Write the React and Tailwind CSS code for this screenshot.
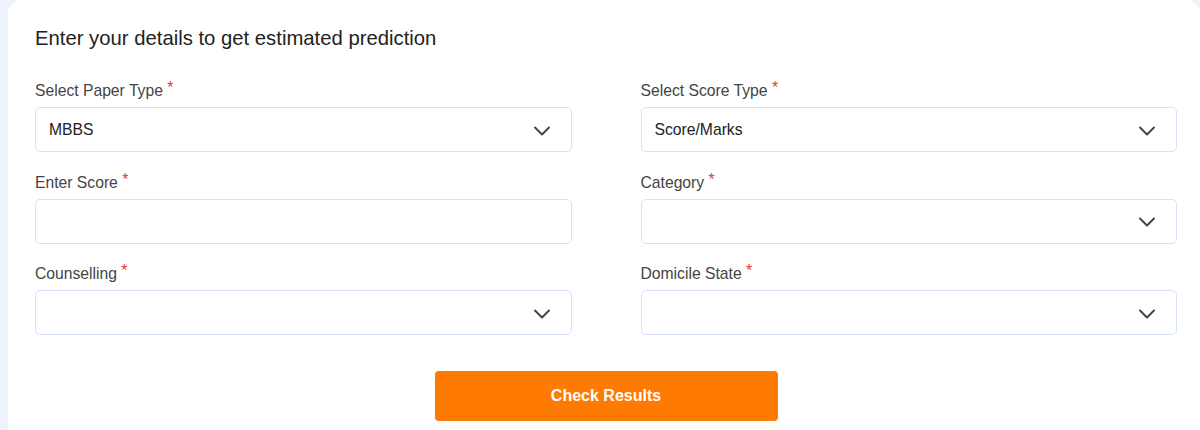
import { ChevronDown } from "lucide-react";

const fields = [
  { label: "Select Paper Type", value: "MBBS", select: true },
  { label: "Select Score Type", value: "Score/Marks", select: true },
  { label: "Enter Score", value: "", select: false },
  { label: "Category", value: "", select: true },
  { label: "Counselling", value: "", select: true },
  { label: "Domicile State", value: "", select: true },
];

function Field({ label, value, select }) {
  return (
    <div>
      <label className="block h-5 pt-px leading-5 text-[15.7px] text-[#444]">
        {label} <span className="relative -top-[3px] text-[#e53935]">*</span>
      </label>
      <div className="mt-[7px] flex h-[45px] items-center justify-between rounded-[5px] border border-[#d6e2fa] bg-white pl-[13px] pr-[15px]">
        <span className="text-[15.7px] text-[#222]">{value}</span>
        {select && <ChevronDown className="mt-[2px] h-[28px] w-[28px] text-[#444]" strokeWidth={1.7} />}
      </div>
    </div>
  );
}

export default function App() {
  return (
    <div className="h-[430px] bg-[#eef2fa] pl-2" style={{ fontFamily: '"Liberation Sans", Arial, sans-serif' }}>
      <div className="h-full rounded-tl-[14px] rounded-tr-[14px] bg-white pl-[27px] pr-[23px] pt-6">
        <h2 className="h-7 leading-7 text-[20.3px] text-[#222]">Enter your details to get estimated prediction</h2>
        <div className="mt-[28px] grid grid-cols-2 gap-x-[69px] gap-y-[19.5px]">
          {fields.map((f) => (
            <Field key={f.label} {...f} />
          ))}
        </div>
        <div className="mt-9 flex justify-center">
          <button className="h-[50px] w-[343px] rounded-[4px] bg-[#ff7a00] text-[16px] font-bold text-white">
            Check Results
          </button>
        </div>
      </div>
    </div>
  );
}
